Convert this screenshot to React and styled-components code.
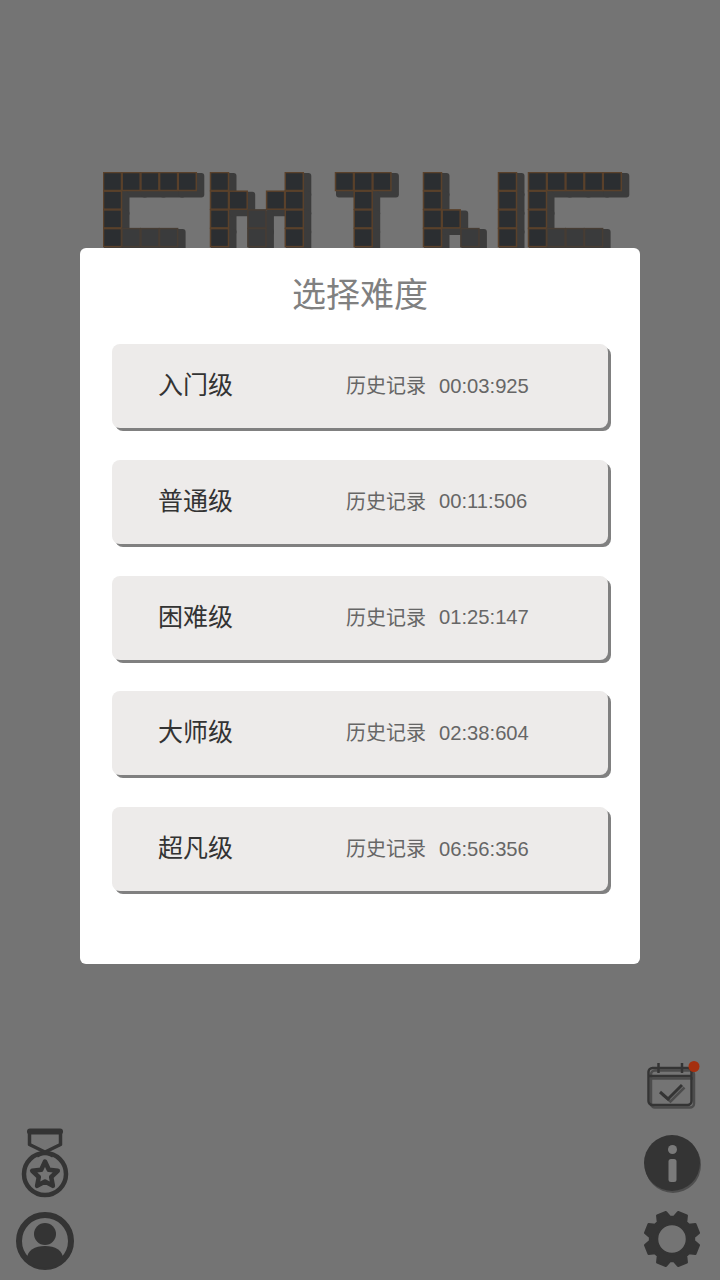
import React from "react";
import styled, { createGlobalStyle } from "styled-components";

const levels = [
  { name: "入门级", time: "00:03:925" },
  { name: "普通级", time: "00:11:506" },
  { name: "困难级", time: "01:25:147" },
  { name: "大师级", time: "02:38:604" },
  { name: "超凡级", time: "06:56:356" },
];

// logo blocks: [x of letter, col, row, faded]
const line = (x, cols, rows, faded = false) => cols.flatMap((c) => rows.map((r) => [x, c, r, faded]));
const logoCells = [
  ...line(0, [0, 1, 2, 3, 4], [0]),
  ...line(0, [0], [1, 2, 3]),
  ...line(0, [1, 2, 3], [3], true),
  ...line(107, [0, 4], [0, 1, 2, 3]),
  ...line(107, [1, 3], [1]),
  ...line(107, [2], [2, 3], true),
  ...line(232, [0, 1, 2], [0]),
  ...line(232, [1], [1, 2, 3]),
  ...line(320, [0], [0, 1, 2, 3]),
  ...line(320, [1], [2]),
  ...line(320, [2], [3], true),
  ...line(395, [0], [0, 1, 2, 3]),
  ...line(425, [0, 1, 2, 3, 4], [0]),
  ...line(425, [0], [1, 2, 3]),
  ...line(425, [1, 2, 3], [3], true),
];

const PITCH = 18.7;

function Logo() {
  return (
    <LogoArt viewBox="0 0 530 76" width="530" height="76">
      {logoCells.map(([x, c, r], i) => (
        <rect key={"s" + i} x={x + c * PITCH + 1} y={r * PITCH + 1} width="25.5" height="24.5" rx="3" fill="#3c3c3c" />
      ))}
      {logoCells.map(([x, c, r, faded], i) => (
        <rect
          key={"c" + i}
          x={x + c * PITCH + 0.5}
          y={r * PITCH + 0.5}
          width="18"
          height="18"
          fill={faded ? "#3a3b3c" : "#2b2e31"}
          stroke={faded ? "#473d34" : "#5a412b"}
          strokeWidth="1.5"
        />
      ))}
    </LogoArt>
  );
}

function starPath(cx, cy, outer, inner) {
  const pts = [];
  for (let i = 0; i < 10; i++) {
    const r = i % 2 ? inner : outer;
    const a = (i * Math.PI) / 5 - Math.PI / 2;
    pts.push(`${(cx + r * Math.cos(a)).toFixed(1)} ${(cy + r * Math.sin(a)).toFixed(1)}`);
  }
  return "M" + pts.join("L") + "Z";
}

function MedalIcon() {
  return (
    <svg width="60" height="72" viewBox="0 0 60 72" fill="none" stroke="#343434">
      <path d="M15 4.5h30" strokeWidth="6" strokeLinecap="round" />
      <path d="M14.5 5v12.5L38 29M45.5 5v12.5L22 29" strokeWidth="3.5" strokeLinejoin="round" />
      <circle cx="30" cy="47" r="21" strokeWidth="4.5" />
      <path d={starPath(30, 48, 13.5, 6.5)} strokeWidth="4.5" strokeLinejoin="round" />
    </svg>
  );
}

function UserIcon() {
  return (
    <svg width="60" height="60" viewBox="0 0 60 60">
      <circle cx="30" cy="30" r="26" fill="none" stroke="#343434" strokeWidth="6" />
      <circle cx="30" cy="23" r="11" fill="#343434" />
      <path d="M12 48c0-9 8-13 18-13s18 4 18 13c-4 6-11 9-18 9s-14-3-18-9z" fill="#343434" />
    </svg>
  );
}

function CalendarIcon() {
  return (
    <svg width="56" height="58" viewBox="0 0 56 58" fill="none">
      <g stroke="#4c4c4c" strokeWidth="2.5" transform="translate(2.5 2.5)">
        <rect x="2.5" y="7" width="43" height="37" rx="4" />
        <path d="M2.5 15h43M14 31l8 7 14-14" />
      </g>
      <g stroke="#343434" strokeWidth="2.5">
        <rect x="2.5" y="7" width="43" height="37" rx="4" />
        <path d="M2.5 15h43M12.5 2v10M36 2v10" />
        <path d="M14 31l8 7 14-14" strokeWidth="3" />
      </g>
      <Dot cx="48" cy="5.5" r="5.5" />
    </svg>
  );
}

function InfoIcon() {
  return (
    <svg width="58" height="58" viewBox="0 0 58 58">
      <circle cx="29" cy="30" r="28" fill="#4e4e4e" />
      <circle cx="28" cy="28" r="28" fill="#343434" />
      <circle cx="28.5" cy="14.5" r="4.5" fill="#7a7a7a" />
      <rect x="24.5" y="24" width="8" height="23" rx="2.5" fill="#7a7a7a" />
    </svg>
  );
}

// eight teeth, turned by half a step so two of them stand on top
function gearPath(cx, cy, outer, root) {
  const pts = [];
  for (let i = 0; i < 8; i++) {
    const a = ((i + 0.5) * Math.PI) / 4 - Math.PI / 2;
    [[-0.3, root], [-0.17, outer], [0.17, outer], [0.3, root]].forEach(([d, r]) => {
      pts.push(`${(cx + r * Math.cos(a + d)).toFixed(1)} ${(cy + r * Math.sin(a + d)).toFixed(1)}`);
    });
  }
  return "M" + pts.join("L") + "Z";
}

function GearIcon() {
  return (
    <svg width="60" height="60" viewBox="0 0 60 60">
      <path
        d={gearPath(30, 30, 27.5, 22) + "M30 15a15 15 0 1 0 0 30a15 15 0 1 0 0-30Z"}
        fill="#343434"
        fillRule="evenodd"
        stroke="#343434"
        strokeWidth="2.5"
        strokeLinejoin="round"
      />
    </svg>
  );
}

export default function App() {
  return (
    <Page>
      <GlobalStyle />
      <Logo />
      <Dock>
        <LeftTools>
          <MedalIcon />
          <UserIcon />
        </LeftTools>
        <RightTools>
          <CalendarIcon />
          <InfoIcon />
          <GearIcon />
        </RightTools>
      </Dock>
      <Scrim>
        <Dialog>
          <Title>选择难度</Title>
          <LevelList>
            {levels.map((level) => (
              <LevelRow key={level.name}>
                <LevelName>{level.name}</LevelName>
                <RecordLabel>历史记录</RecordLabel>
                <RecordTime>{level.time}</RecordTime>
              </LevelRow>
            ))}
          </LevelList>
        </Dialog>
      </Scrim>
    </Page>
  );
}

const GlobalStyle = createGlobalStyle`
  body {
    margin: 0;
    background: #747474;
    font-family: "Liberation Sans", "Noto Sans CJK SC", sans-serif;
  }
`;

const Page = styled.main`
  position: relative;
  width: 720px;
  height: 1280px;
  overflow: hidden;
  background: #747474;
  display: flex;
  flex-direction: column;
  justify-content: space-between;
`;

const LogoArt = styled.svg`
  display: block;
  margin: 172px 0 0 103px;
  filter: blur(0.7px);
`;

const Dot = styled.circle`
  fill: #a5300f;
`;

const Dock = styled.div`
  display: flex;
  justify-content: space-between;
  align-items: flex-end;
  padding: 0 18px 9px 15px;
`;

const LeftTools = styled.div`
  display: flex;
  flex-direction: column;
  gap: 12px;

  svg {
    display: block;
  }
`;

const RightTools = styled.div`
  display: flex;
  flex-direction: column;
  align-items: flex-end;
  gap: 16px;
  padding-bottom: 2px;

  svg {
    display: block;
  }
`;

const Scrim = styled.div`
  position: absolute;
  inset: 0;
  display: flex;
  justify-content: center;
  align-items: flex-start;
  padding-top: 248px;
`;

const Dialog = styled.section`
  width: 560px;
  height: 716px;
  box-sizing: border-box;
  padding: 0 32px;
  background: #fff;
  border-radius: 6px;
`;

const Title = styled.h2`
  margin: 0;
  height: 96px;
  padding-bottom: 8px;
  box-sizing: border-box;
  display: flex;
  align-items: center;
  justify-content: center;
  font-size: 34px;
  font-weight: 400;
  color: #808080;
`;

const LevelList = styled.div`
  display: flex;
  flex-direction: column;
  gap: 31.8px;
`;

const LevelRow = styled.div`
  height: 84px;
  display: flex;
  align-items: center;
  padding-left: 46px;
  background: #edebea;
  border-radius: 8px;
  box-shadow: 3px 3px 0 #808080;
`;

const LevelName = styled.span`
  width: 188px;
  padding-bottom: 6px;
  font-size: 25px;
  color: #333;
`;

const RecordLabel = styled.span`
  margin-right: 13px;
  padding-bottom: 3px;
  font-size: 20px;
  color: #666;
`;

const RecordTime = styled.span`
  font-size: 20.2px;
  color: #666;
`;
